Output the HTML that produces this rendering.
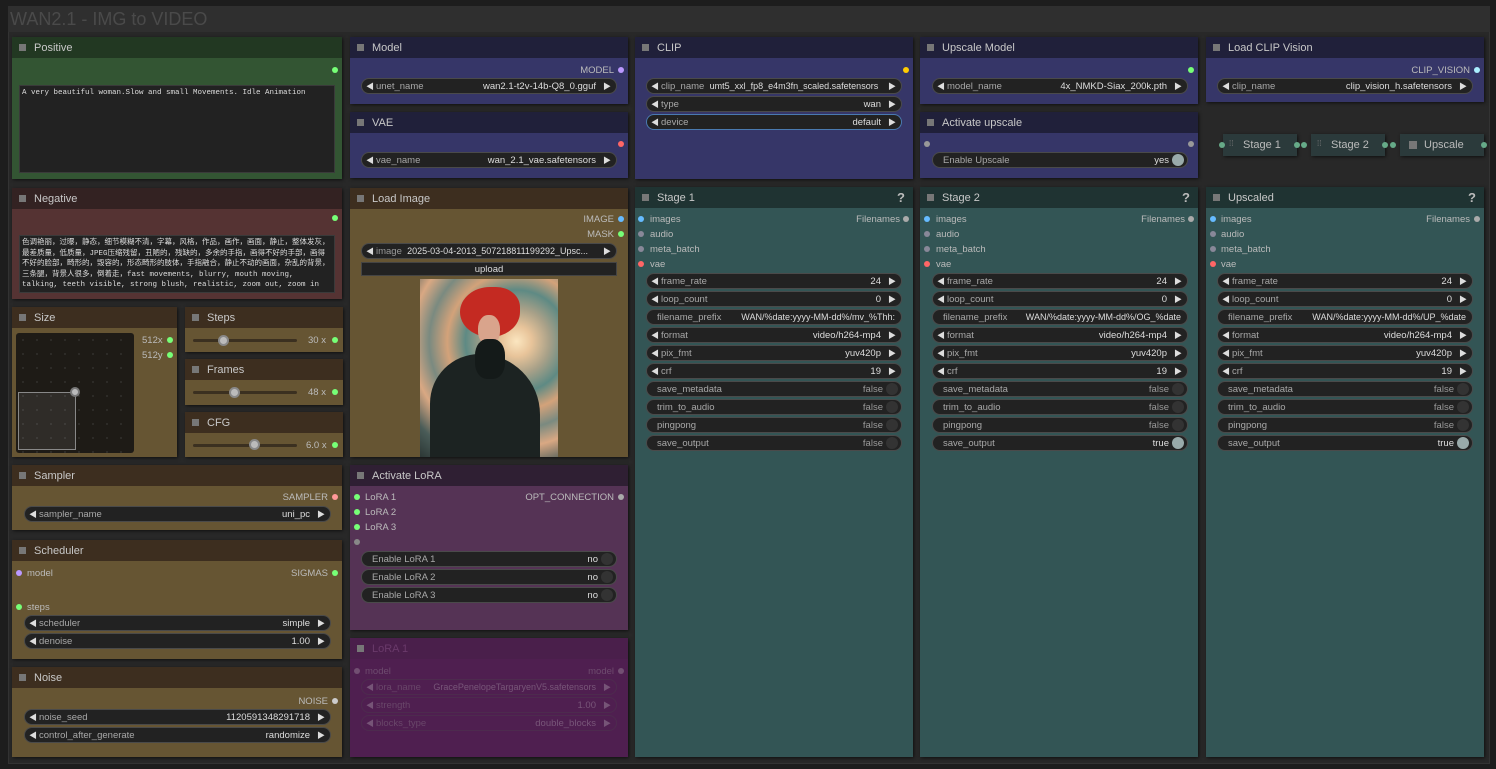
<!DOCTYPE html>
<html><head><meta charset="utf-8">
<style>
*{box-sizing:border-box;margin:0;padding:0}
body{width:1496px;height:769px;background:#1d1d1d;position:relative;overflow:hidden;font-family:"Liberation Sans","Noto Sans CJK SC",sans-serif;font-size:10px;color:#aaa}
.a{position:absolute}
.grp{left:8px;top:6px;width:1482px;height:758px;background:#282828;border:1px solid #333}
.gt{left:8px;top:6px;width:1482px;height:26px;background:#2f2f2f;color:#4a4a4a;font-size:18px;line-height:26px;padding-left:2px}
.n{position:absolute;box-shadow:1px 1px 3px #111}
.t{height:21px;line-height:22px;font-size:11px;color:#c8c8c8;padding-left:22px;position:relative}
.t:before{content:"";position:absolute;left:7px;top:7px;width:7px;height:7px;background:#777}
.q{position:absolute;right:8px;top:0;font-size:13px;font-weight:bold;color:#bbb}
.w{position:absolute;height:16px;border-radius:8px;background:#222;border:1px solid #4a4a4a;line-height:15px;font-size:9.5px;color:#a8a8a8;white-space:nowrap;overflow:hidden}
.w .l{position:absolute;left:14px}
.w .v{position:absolute;right:20px;color:#ddd}
.w .al{position:absolute;left:4px;color:#ddd;font-size:8px}
.w .ar{position:absolute;right:5px;color:#ddd;font-size:8px}
.w.tg .l{left:10px}
.w.tg .v{right:18px}
.w.tg .k{position:absolute;right:3px;top:1px;width:12px;height:12px;border-radius:6px;background:#333}
.fp{right:6px !important;font-size:9px}
.d{position:absolute;width:6px;height:6px;border-radius:3px}
.s{position:absolute;font-size:9.5px;color:#bbb;white-space:nowrap}
.r{text-align:right}
</style></head><body>
<div class="a grp"></div>
<div class="a gt">WAN2.1 - IMG to VIDEO</div>

<div class="n" style="left:12px;top:37px;width:330px;height:142px;background:#335533"><div class="t" style="background:#223822">Positive</div></div>
<div class="d" style="left:332px;top:67px;background:#7f7"></div>
<div class="a" style="left:19px;top:85px;width:316px;height:88px;background:#222;border:1px solid #3a3a3a;font-family:'Liberation Mono',monospace;font-size:7.5px;color:#ddd;padding:3px 2px">A very beautiful woman.Slow and small Movements. Idle Animation</div>

<div class="n" style="left:12px;top:188px;width:330px;height:111px;background:#553333"><div class="t" style="background:#332222">Negative</div></div>
<div class="d" style="left:332px;top:215px;background:#7f7"></div>
<div class="a" style="left:19px;top:235px;width:316px;height:58px;background:#222;border:1px solid #3a3a3a;font-family:'Liberation Mono','Noto Sans CJK SC',monospace;font-size:7.5px;line-height:10.5px;color:#ddd;padding:2px 2px;overflow:hidden">色调艳丽，过曝，静态，细节模糊不清，字幕，风格，作品，画作，画面，静止，整体发灰，最差质量，低质量，JPEG压缩残留，丑陋的，残缺的，多余的手指，画得不好的手部，画得不好的脸部，畸形的，毁容的，形态畸形的肢体，手指融合，静止不动的画面，杂乱的背景，三条腿，背景人很多，倒着走，fast movements, blurry, mouth moving, talking, teeth visible, strong blush, realistic, zoom out, zoom in</div>

<div class="n" style="left:12px;top:307px;width:165px;height:150px;background:#665533"><div class="t" style="background:#3d2e1f">Size</div></div>
<div class="a" style="left:16px;top:333px;width:118px;height:120px;background:#1e1b16;border-radius:3px;background-image:radial-gradient(#555 0.6px,transparent 0.8px);background-size:14px 14px"></div>
<div class="a" style="left:18px;top:392px;width:58px;height:58px;border:1px solid #888;background:rgba(255,255,255,0.08)"></div>
<div class="a" style="left:70px;top:387px;width:10px;height:10px;border-radius:5px;background:#bbb;border:2px solid #777"></div>
<div class="s" style="left:142px;top:335px">512x</div><div class="d" style="left:167px;top:337px;background:#7f7"></div>
<div class="s" style="left:142px;top:350px">512y</div><div class="d" style="left:167px;top:352px;background:#7f7"></div>

<div class="n" style="left:185px;top:307px;width:158px;height:45px;background:#665533"><div class="t" style="background:#3d2e1f">Steps</div></div>
<div class="n" style="left:185px;top:359px;width:158px;height:46px;background:#665533"><div class="t" style="background:#3d2e1f">Frames</div></div>
<div class="n" style="left:185px;top:412px;width:158px;height:45px;background:#665533"><div class="t" style="background:#3d2e1f">CFG</div></div>
<div class="a" style="left:193px;top:339px;width:104px;height:3px;background:#3b3020;border-radius:2px"></div>
<div class="a" style="left:218px;top:335px;width:11px;height:11px;border-radius:6px;background:#bbb;border:2px solid #888"></div>
<div class="s" style="left:308px;top:335px">30 x</div><div class="d" style="left:332px;top:337px;background:#7f7"></div>
<div class="a" style="left:193px;top:391px;width:104px;height:3px;background:#3b3020;border-radius:2px"></div>
<div class="a" style="left:229px;top:387px;width:11px;height:11px;border-radius:6px;background:#bbb;border:2px solid #888"></div>
<div class="s" style="left:308px;top:387px">48 x</div><div class="d" style="left:332px;top:389px;background:#7f7"></div>
<div class="a" style="left:193px;top:444px;width:104px;height:3px;background:#3b3020;border-radius:2px"></div>
<div class="a" style="left:249px;top:439px;width:11px;height:11px;border-radius:6px;background:#bbb;border:2px solid #888"></div>
<div class="s" style="left:306px;top:440px">6.0 x</div><div class="d" style="left:332px;top:442px;background:#7f7"></div>

<div class="n" style="left:12px;top:465px;width:330px;height:65px;background:#665533"><div class="t" style="background:#3d2e1f">Sampler</div></div>
<div class="s r" style="left:250px;top:492px;width:78px">SAMPLER</div><div class="d" style="left:332px;top:494px;background:#f99"></div>
<div class="w" style="left:24px;top:506px;width:307px"><span class="al">◀</span><span class="l">sampler_name</span><span class="v">uni_pc</span><span class="ar">▶</span></div>

<div class="n" style="left:12px;top:540px;width:330px;height:119px;background:#665533"><div class="t" style="background:#3d2e1f">Scheduler</div></div>
<div class="d" style="left:16px;top:570px;background:#b9f"></div><div class="s" style="left:27px;top:568px">model</div>
<div class="s r" style="left:250px;top:568px;width:78px">SIGMAS</div><div class="d" style="left:332px;top:570px;background:#7f7"></div>
<div class="d" style="left:16px;top:604px;background:#7f7"></div><div class="s" style="left:27px;top:602px">steps</div>
<div class="w" style="left:24px;top:615px;width:307px"><span class="al">◀</span><span class="l">scheduler</span><span class="v">simple</span><span class="ar">▶</span></div>
<div class="w" style="left:24px;top:633px;width:307px"><span class="al">◀</span><span class="l">denoise</span><span class="v">1.00</span><span class="ar">▶</span></div>

<div class="n" style="left:12px;top:667px;width:330px;height:90px;background:#665533"><div class="t" style="background:#3d2e1f">Noise</div></div>
<div class="s r" style="left:250px;top:696px;width:78px">NOISE</div><div class="d" style="left:332px;top:698px;background:#ccc"></div>
<div class="w" style="left:24px;top:709px;width:307px"><span class="al">◀</span><span class="l">noise_seed</span><span class="v">1120591348291718</span><span class="ar">▶</span></div>
<div class="w" style="left:24px;top:727px;width:307px"><span class="al">◀</span><span class="l">control_after_generate</span><span class="v">randomize</span><span class="ar">▶</span></div>

<div class="n" style="left:350px;top:37px;width:278px;height:67px;background:#363668"><div class="t" style="background:#20203a">Model</div></div>
<div class="s r" style="left:540px;top:65px;width:74px">MODEL</div><div class="d" style="left:618px;top:67px;background:#b9f"></div>
<div class="w" style="left:361px;top:78px;width:256px"><span class="al">◀</span><span class="l">unet_name</span><span class="v">wan2.1-t2v-14b-Q8_0.gguf</span><span class="ar">▶</span></div>
<div class="n" style="left:350px;top:112px;width:278px;height:66px;background:#363668"><div class="t" style="background:#20203a">VAE</div></div>
<div class="d" style="left:618px;top:141px;background:#f66"></div>
<div class="w" style="left:361px;top:152px;width:256px"><span class="al">◀</span><span class="l">vae_name</span><span class="v">wan_2.1_vae.safetensors</span><span class="ar">▶</span></div>

<div class="n" style="left:350px;top:188px;width:278px;height:269px;background:#665533"><div class="t" style="background:#3d2e1f">Load Image</div></div>
<div class="s r" style="left:540px;top:214px;width:74px">IMAGE</div><div class="d" style="left:618px;top:216px;background:#6bf"></div>
<div class="s r" style="left:540px;top:229px;width:74px">MASK</div><div class="d" style="left:618px;top:231px;background:#7f7"></div>
<div class="w" style="left:361px;top:243px;width:256px"><span class="al">◀</span><span class="l" style="color:#999">image&nbsp;&nbsp;<span style="color:#ddd;font-size:9px">2025-03-04-2013_507218811199292_Upsc...</span></span><span class="ar">▶</span></div>
<div class="a" style="left:361px;top:262px;width:256px;height:14px;background:#222;border:1px solid #444;color:#ddd;text-align:center;line-height:13px;font-size:9.5px">upload</div>
<div class="a" style="left:420px;top:279px;width:138px;height:178px;overflow:hidden;background:radial-gradient(circle at 70% 35%,#fbe6c0 0,#e8c49a 10%,#a7a088 22%,#5e8a84 34%,#d3a27a 46%,#7a8a80 58%,#d9a883 70%,#4a5c58 85%,#2c3735 100%)">
<div class="a" style="left:40px;top:8px;width:60px;height:50px;border-radius:50% 40% 50% 50%;background:#c42a22"></div>
<div class="a" style="left:58px;top:36px;width:22px;height:30px;border-radius:45%;background:#d9a48c"></div>
<div class="a" style="left:10px;top:75px;width:110px;height:110px;border-radius:45% 55% 0 0;background:#1c2322"></div>
<div class="a" style="left:55px;top:60px;width:30px;height:40px;border-radius:40%;background:#141a19"></div>
</div>

<div class="n" style="left:350px;top:465px;width:278px;height:165px;background:#553355"><div class="t" style="background:#2f1f33">Activate LoRA</div></div>
<div class="d" style="left:354px;top:494px;background:#7f7"></div><div class="s" style="left:365px;top:492px">LoRA 1</div>
<div class="d" style="left:354px;top:509px;background:#7f7"></div><div class="s" style="left:365px;top:507px">LoRA 2</div>
<div class="d" style="left:354px;top:524px;background:#7f7"></div><div class="s" style="left:365px;top:522px">LoRA 3</div>
<div class="d" style="left:354px;top:539px;background:#888"></div>
<div class="s r" style="left:500px;top:492px;width:114px">OPT_CONNECTION</div><div class="d" style="left:618px;top:494px;background:#aaa"></div>
<div class="w tg" style="left:361px;top:551px;width:256px"><span class="l">Enable LoRA 1</span><span class="v">no</span><span class="k"></span></div>
<div class="w tg" style="left:361px;top:569px;width:256px"><span class="l">Enable LoRA 2</span><span class="v">no</span><span class="k"></span></div>
<div class="w tg" style="left:361px;top:587px;width:256px"><span class="l">Enable LoRA 3</span><span class="v">no</span><span class="k"></span></div>

<div class="n" style="left:350px;top:638px;width:278px;height:119px;background:#4f1f50"><div class="t" style="background:#4a1f4b;color:#6a3a6b">LoRA 1</div></div>
<div style="opacity:0.28">
<div class="d" style="left:354px;top:668px;background:#ccc"></div><div class="s" style="left:365px;top:666px">model</div>
<div class="s r" style="left:540px;top:666px;width:74px">model</div><div class="d" style="left:618px;top:668px;background:#ccc"></div>
<div class="w" style="left:361px;top:679px;width:256px;background:transparent"><span class="al">◀</span><span class="l">lora_name</span><span class="v" style="font-size:9px">GracePenelopeTargaryenV5.safetensors</span><span class="ar">▶</span></div>
<div class="w" style="left:361px;top:697px;width:256px;background:transparent"><span class="al">◀</span><span class="l">strength</span><span class="v">1.00</span><span class="ar">▶</span></div>
<div class="w" style="left:361px;top:715px;width:256px;background:transparent"><span class="al">◀</span><span class="l">blocks_type</span><span class="v">double_blocks</span><span class="ar">▶</span></div>
</div>

<div class="n" style="left:635px;top:37px;width:278px;height:142px;background:#363668"><div class="t" style="background:#20203a">CLIP</div></div>
<div class="d" style="left:903px;top:67px;background:#fc0"></div>
<div class="w" style="left:646px;top:78px;width:256px"><span class="al">◀</span><span class="l">clip_name&nbsp;&nbsp;<span style="color:#ddd;font-size:9px">umt5_xxl_fp8_e4m3fn_scaled.safetensors</span></span><span class="ar">▶</span></div>
<div class="w" style="left:646px;top:96px;width:256px"><span class="al">◀</span><span class="l">type</span><span class="v">wan</span><span class="ar">▶</span></div>
<div class="w" style="left:646px;top:114px;width:256px;border-color:#4a7ab0"><span class="al">◀</span><span class="l">device</span><span class="v">default</span><span class="ar">▶</span></div>

<div class="n" style="left:920px;top:37px;width:278px;height:67px;background:#363668"><div class="t" style="background:#20203a">Upscale Model</div></div>
<div class="d" style="left:1188px;top:67px;background:#7f7"></div>
<div class="w" style="left:932px;top:78px;width:256px"><span class="al">◀</span><span class="l">model_name</span><span class="v">4x_NMKD-Siax_200k.pth</span><span class="ar">▶</span></div>
<div class="n" style="left:920px;top:112px;width:278px;height:66px;background:#363668"><div class="t" style="background:#20203a">Activate upscale</div></div>
<div class="d" style="left:924px;top:141px;background:#999"></div><div class="d" style="left:1188px;top:141px;background:#999"></div>
<div class="w tg" style="left:932px;top:152px;width:256px"><span class="l">Enable Upscale</span><span class="v">yes</span><span class="k" style="background:#9aa"></span></div>

<div class="n" style="left:1206px;top:37px;width:278px;height:65px;background:#363668"><div class="t" style="background:#20203a">Load CLIP Vision</div></div>
<div class="s r" style="left:1380px;top:65px;width:90px">CLIP_VISION</div><div class="d" style="left:1474px;top:67px;background:#aef"></div>
<div class="w" style="left:1217px;top:78px;width:256px"><span class="al">◀</span><span class="l">clip_name</span><span class="v">clip_vision_h.safetensors</span><span class="ar">▶</span></div>

<div class="a" style="left:1223px;top:134px;width:74px;height:22px;background:#2b3a3b;box-shadow:1px 1px 3px #111;color:#bbb;font-size:11px;line-height:22px;padding-left:20px">Stage 1</div>
<div class="a" style="left:1311px;top:134px;width:74px;height:22px;background:#2b3a3b;box-shadow:1px 1px 3px #111;color:#bbb;font-size:11px;line-height:22px;padding-left:20px">Stage 2</div>
<div class="a" style="left:1400px;top:134px;width:84px;height:22px;background:#2b3a3b;box-shadow:1px 1px 3px #111;color:#bbb;font-size:11px;line-height:22px;padding-left:24px">Upscale</div>
<div class="a" style="left:1409px;top:141px;width:8px;height:8px;background:#777"></div>
<div class="s" style="left:1229px;top:139px;color:#777;font-size:8px">⁞⁞</div>
<div class="s" style="left:1317px;top:139px;color:#777;font-size:8px">⁞⁞</div>
<div class="d" style="left:1219px;top:142px;background:#6a8"></div><div class="d" style="left:1294px;top:142px;background:#6a8"></div>
<div class="d" style="left:1301px;top:142px;background:#6a8"></div><div class="d" style="left:1382px;top:142px;background:#6a8"></div>
<div class="d" style="left:1390px;top:142px;background:#6a8"></div><div class="d" style="left:1481px;top:142px;background:#6a8"></div>

<div class="n" style="left:635px;top:187px;width:278px;height:570px;background:#335555"><div class="t" style="background:#1f3332">Stage 1<span class="q">?</span></div></div>
<div class="n" style="left:920px;top:187px;width:278px;height:570px;background:#335555"><div class="t" style="background:#1f3332">Stage 2<span class="q">?</span></div></div>
<div class="n" style="left:1206px;top:187px;width:278px;height:570px;background:#335555"><div class="t" style="background:#1f3332">Upscaled<span class="q">?</span></div></div>

<div class="d" style="left:638px;top:216px;background:#6bf"></div><div class="s" style="left:650px;top:214px">images</div>
<div class="d" style="left:638px;top:231px;background:#889"></div><div class="s" style="left:650px;top:229px">audio</div>
<div class="d" style="left:638px;top:246px;background:#889"></div><div class="s" style="left:650px;top:244px">meta_batch</div>
<div class="d" style="left:638px;top:261px;background:#f66"></div><div class="s" style="left:650px;top:259px">vae</div>
<div class="s r" style="left:820px;top:214px;width:80px">Filenames</div><div class="d" style="left:903px;top:216px;background:#aaa"></div>
<div class="w" style="left:646px;top:273px;width:256px"><span class="al">◀</span><span class="l">frame_rate</span><span class="v">24</span><span class="ar">▶</span></div>
<div class="w" style="left:646px;top:291px;width:256px"><span class="al">◀</span><span class="l">loop_count</span><span class="v">0</span><span class="ar">▶</span></div>
<div class="w tg" style="left:646px;top:309px;width:256px"><span class="l">filename_prefix</span><span class="v fp">WAN/%date:yyyy-MM-dd%/mv_%Thh:</span></div>
<div class="w" style="left:646px;top:327px;width:256px"><span class="al">◀</span><span class="l">format</span><span class="v">video/h264-mp4</span><span class="ar">▶</span></div>
<div class="w" style="left:646px;top:345px;width:256px"><span class="al">◀</span><span class="l">pix_fmt</span><span class="v">yuv420p</span><span class="ar">▶</span></div>
<div class="w" style="left:646px;top:363px;width:256px"><span class="al">◀</span><span class="l">crf</span><span class="v">19</span><span class="ar">▶</span></div>
<div class="w tg" style="left:646px;top:381px;width:256px"><span class="l">save_metadata</span><span class="v" style="color:#999">false</span><span class="k"></span></div>
<div class="w tg" style="left:646px;top:399px;width:256px"><span class="l">trim_to_audio</span><span class="v" style="color:#999">false</span><span class="k"></span></div>
<div class="w tg" style="left:646px;top:417px;width:256px"><span class="l">pingpong</span><span class="v" style="color:#999">false</span><span class="k"></span></div>
<div class="w tg" style="left:646px;top:435px;width:256px"><span class="l">save_output</span><span class="v" style="color:#999">false</span><span class="k"></span></div>

<div class="d" style="left:924px;top:216px;background:#6bf"></div><div class="s" style="left:936px;top:214px">images</div>
<div class="d" style="left:924px;top:231px;background:#889"></div><div class="s" style="left:936px;top:229px">audio</div>
<div class="d" style="left:924px;top:246px;background:#889"></div><div class="s" style="left:936px;top:244px">meta_batch</div>
<div class="d" style="left:924px;top:261px;background:#f66"></div><div class="s" style="left:936px;top:259px">vae</div>
<div class="s r" style="left:1105px;top:214px;width:80px">Filenames</div><div class="d" style="left:1188px;top:216px;background:#aaa"></div>
<div class="w" style="left:932px;top:273px;width:256px"><span class="al">◀</span><span class="l">frame_rate</span><span class="v">24</span><span class="ar">▶</span></div>
<div class="w" style="left:932px;top:291px;width:256px"><span class="al">◀</span><span class="l">loop_count</span><span class="v">0</span><span class="ar">▶</span></div>
<div class="w tg" style="left:932px;top:309px;width:256px"><span class="l">filename_prefix</span><span class="v fp">WAN/%date:yyyy-MM-dd%/OG_%date</span></div>
<div class="w" style="left:932px;top:327px;width:256px"><span class="al">◀</span><span class="l">format</span><span class="v">video/h264-mp4</span><span class="ar">▶</span></div>
<div class="w" style="left:932px;top:345px;width:256px"><span class="al">◀</span><span class="l">pix_fmt</span><span class="v">yuv420p</span><span class="ar">▶</span></div>
<div class="w" style="left:932px;top:363px;width:256px"><span class="al">◀</span><span class="l">crf</span><span class="v">19</span><span class="ar">▶</span></div>
<div class="w tg" style="left:932px;top:381px;width:256px"><span class="l">save_metadata</span><span class="v" style="color:#999">false</span><span class="k"></span></div>
<div class="w tg" style="left:932px;top:399px;width:256px"><span class="l">trim_to_audio</span><span class="v" style="color:#999">false</span><span class="k"></span></div>
<div class="w tg" style="left:932px;top:417px;width:256px"><span class="l">pingpong</span><span class="v" style="color:#999">false</span><span class="k"></span></div>
<div class="w tg" style="left:932px;top:435px;width:256px"><span class="l">save_output</span><span class="v">true</span><span class="k" style="background:#9aa"></span></div>

<div class="d" style="left:1210px;top:216px;background:#6bf"></div><div class="s" style="left:1221px;top:214px">images</div>
<div class="d" style="left:1210px;top:231px;background:#889"></div><div class="s" style="left:1221px;top:229px">audio</div>
<div class="d" style="left:1210px;top:246px;background:#889"></div><div class="s" style="left:1221px;top:244px">meta_batch</div>
<div class="d" style="left:1210px;top:261px;background:#f66"></div><div class="s" style="left:1221px;top:259px">vae</div>
<div class="s r" style="left:1390px;top:214px;width:80px">Filenames</div><div class="d" style="left:1474px;top:216px;background:#aaa"></div>
<div class="w" style="left:1217px;top:273px;width:256px"><span class="al">◀</span><span class="l">frame_rate</span><span class="v">24</span><span class="ar">▶</span></div>
<div class="w" style="left:1217px;top:291px;width:256px"><span class="al">◀</span><span class="l">loop_count</span><span class="v">0</span><span class="ar">▶</span></div>
<div class="w tg" style="left:1217px;top:309px;width:256px"><span class="l">filename_prefix</span><span class="v fp">WAN/%date:yyyy-MM-dd%/UP_%date</span></div>
<div class="w" style="left:1217px;top:327px;width:256px"><span class="al">◀</span><span class="l">format</span><span class="v">video/h264-mp4</span><span class="ar">▶</span></div>
<div class="w" style="left:1217px;top:345px;width:256px"><span class="al">◀</span><span class="l">pix_fmt</span><span class="v">yuv420p</span><span class="ar">▶</span></div>
<div class="w" style="left:1217px;top:363px;width:256px"><span class="al">◀</span><span class="l">crf</span><span class="v">19</span><span class="ar">▶</span></div>
<div class="w tg" style="left:1217px;top:381px;width:256px"><span class="l">save_metadata</span><span class="v" style="color:#999">false</span><span class="k"></span></div>
<div class="w tg" style="left:1217px;top:399px;width:256px"><span class="l">trim_to_audio</span><span class="v" style="color:#999">false</span><span class="k"></span></div>
<div class="w tg" style="left:1217px;top:417px;width:256px"><span class="l">pingpong</span><span class="v" style="color:#999">false</span><span class="k"></span></div>
<div class="w tg" style="left:1217px;top:435px;width:256px"><span class="l">save_output</span><span class="v">true</span><span class="k" style="background:#9aa"></span></div>
</body></html>
